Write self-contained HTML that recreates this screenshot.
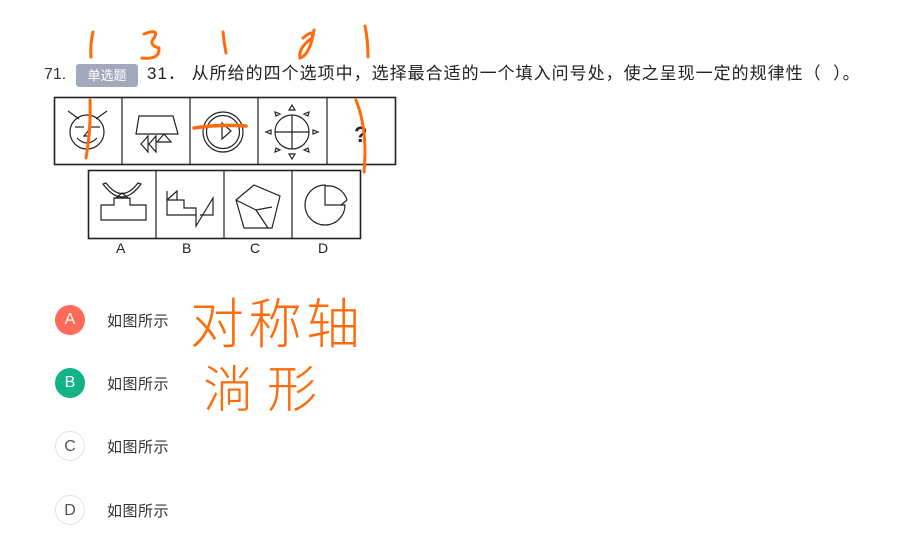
<!DOCTYPE html>
<html><head><meta charset="utf-8"><style>
body{margin:0;width:922px;height:550px;background:#fff;position:relative;overflow:hidden;font-family:"Liberation Sans","Noto Sans CJK SC",sans-serif;color:#333}
.t{position:absolute;white-space:nowrap}
.c{position:absolute;left:55px;width:30px;height:30px;border-radius:50%;text-align:center;line-height:30px;font-size:16px;box-sizing:border-box}
.o{position:absolute;left:107px;font-size:15px;color:#333;letter-spacing:0.5px}
.hw{position:absolute;color:#ff6a0a;font-family:"Noto Sans CJK SC",sans-serif;font-weight:300;white-space:nowrap}
</style></head><body>
<div class="t" style="left:44px;top:64px;font-size:16px;line-height:22px">71.</div>
<div class="t" style="left:76px;top:64px;width:62px;height:23px;background:#a3a9bd;border-radius:3px;color:#fff;font-size:13px;line-height:23px;text-align:center">单选题</div>
<div class="t" style="left:147px;top:62px;font-size:17px;line-height:24px;color:#222;letter-spacing:1px">31．&nbsp;从所给的四个选项中，选择最合适的一个填入问号处，使之呈现一定的规律性（&nbsp;&nbsp;）。</div>

<svg width="922" height="550" style="position:absolute;left:0;top:0" fill="none" stroke="#222" stroke-width="1.2">
<rect x="54.5" y="97.5" width="341" height="67" stroke-width="1.6"/>
<line x1="122" y1="97" x2="122" y2="165"/><line x1="190" y1="97" x2="190" y2="165"/><line x1="258" y1="97" x2="258" y2="165"/><line x1="327" y1="97" x2="327" y2="165"/>
<rect x="88.5" y="170.5" width="272" height="68" stroke-width="1.6"/>
<line x1="156" y1="170" x2="156" y2="239"/><line x1="224" y1="170" x2="224" y2="239"/><line x1="292" y1="170" x2="292" y2="239"/>
<circle cx="87" cy="132" r="17"/><line x1="68" y1="111" x2="79" y2="119"/><line x1="107" y1="111" x2="96" y2="119"/>
<line x1="75" y1="127" x2="84" y2="127"/><line x1="91" y1="127" x2="100" y2="127"/>
<path d="M84 136 L89 130 L89 136 Z"/><path d="M77 138 Q87 148 97 138"/>
<path d="M139 116 H173 L178 134 H136 Z"/>
<path d="M141 144 L148 136 L148 152 Z M149 144 L156 136 L156 152 Z M157 142 L164 134 L171 142 Z"/>
<circle cx="223" cy="132" r="20"/><circle cx="223" cy="132" r="16.5"/><path d="M222 123 L231 131 L222 139 Z"/>
<circle cx="292" cy="132" r="17"/><line x1="275" y1="132" x2="309" y2="132"/><line x1="292" y1="115" x2="292" y2="149"/>
<path d="M289 110 L292 105 L295 110Z M289 154 L292 159 L295 154Z M271 130 L266 132 L271 134Z M313 130 L318 132 L313 134Z M276 116 L275 112 L280 114Z M308 116 L309 112 L304 114Z M276 148 L275 152 L280 150Z M308 148 L309 152 L304 150Z"/>
<text x="354" y="142" font-size="22" font-weight="bold" fill="#222" stroke="none" font-family="Liberation Sans">?</text>
<path d="M103 184 Q122 210 141 184 L138 183 Q122 204 106 183 Z"/>
<path d="M116 198 L122 193 L128 198 Z"/>
<path d="M101 205 H114 V198 H130 V205 H146 V220 H101 Z"/>
<path d="M167 191 V215 H196 V226 L213 198 V215 H200"/>
<path d="M167 200 L177 191 V200 M167 200 H184 V208 H196 V215"/>
<path d="M236 200 L254 185 L280 196 L272 228 L244 228 Z M236 200 L256 210 L272 207 M256 210 L268 228"/>
<path d="M325 185 A20 20 0 1 0 345 205 L325 205 Z"/>
<path d="M325 186 A20 20 0 0 1 347 200 M347 200 L341 205"/>
<g font-family="Liberation Sans" font-size="14" fill="#222" stroke="none">
<text x="116" y="253">A</text><text x="182" y="253">B</text><text x="250" y="253">C</text><text x="318" y="253">D</text></g>
<g stroke="#ff6a0a" stroke-width="3" stroke-linecap="round">
<path d="M93 32 Q90 45 91 57"/><path d="M90 100 Q91 130 86 158"/>
<path d="M144 34 Q160 28 154 38 Q148 45 159 48 Q160 60 142 58"/>
<path d="M223 32 Q224 43 226 53"/>
<path d="M303 38 Q315 28 312 38 Q298 48 300 58 Q310 55 314 30"/>
<path d="M365 26 Q368 40 368 57"/><path d="M356 100 Q368 130 364 172"/>
<path d="M194 128 Q220 124 246 126" stroke-width="3.5"/>
</g>
</svg>
<div class="hw" style="left:190px;top:280px;font-size:54px;letter-spacing:4px">对称轴</div>
<div class="hw" style="left:203px;top:350px;font-size:50px;letter-spacing:14px">淌形</div>

<div class="c" style="top:305px;background:#ff6b56;color:#fff">A</div><div class="o" style="top:310px">如图所示</div>
<div class="c" style="top:368px;background:#13b386;color:#fff">B</div><div class="o" style="top:373px">如图所示</div>
<div class="c" style="top:431px;border:1px solid #e2e2e2;color:#555">C</div><div class="o" style="top:436px">如图所示</div>
<div class="c" style="top:495px;border:1px solid #e2e2e2;color:#555">D</div><div class="o" style="top:500px">如图所示</div>
</body></html>
